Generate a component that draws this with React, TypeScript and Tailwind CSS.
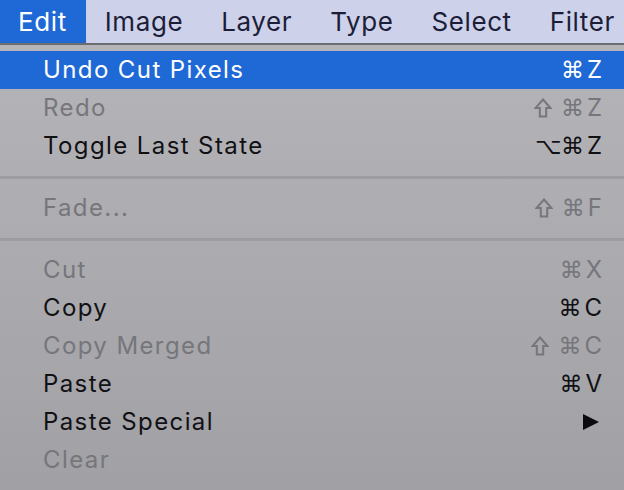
import React from "react";

type Item = {
  label: string;
  keys?: string[];
  enabled?: boolean;
  active?: boolean;
  submenu?: boolean;
};

const groups: Item[][] = [
  [
    { label: "Undo Cut Pixels", keys: ["⌘", "Z"], enabled: true, active: true },
    { label: "Redo", keys: ["⇧", "⌘", "Z"] },
    { label: "Toggle Last State", keys: ["⌥", "⌘", "Z"], enabled: true },
  ],
  [{ label: "Fade...", keys: ["⇧", "⌘", "F"] }],
  [
    { label: "Cut", keys: ["⌘", "X"] },
    { label: "Copy", keys: ["⌘", "C"], enabled: true },
    { label: "Copy Merged", keys: ["⇧", "⌘", "C"] },
    { label: "Paste", keys: ["⌘", "V"], enabled: true },
    { label: "Paste Special", enabled: true, submenu: true },
    { label: "Clear" },
  ],
];

const menus = ["Edit", "Image", "Layer", "Type", "Select", "Filter"];

// outline shift arrow, the font's ⇧ is too thin
function ShiftIcon() {
  return (
    <svg width="18" height="20" viewBox="0 0 18 20" className="mr-[5px]">
      <path
        d="M9 1.5 L16.5 10 H12.2 V18.5 H5.8 V10 H1.5 Z"
        fill="none"
        stroke="currentColor"
        strokeWidth="2"
      />
    </svg>
  );
}

function MenuRow({ item }: { item: Item }) {
  const color = item.active
    ? "text-white"
    : item.enabled
    ? "text-[#111114]"
    : "text-[#76767b]";
  return (
    <div
      className={`flex h-[38px] items-center justify-between pl-[43px] pr-[22px] ${
        item.active ? "bg-[#1f69d6]" : ""
      } ${color}`}
    >
      <span className="text-[24px] leading-none tracking-[1.4px]">{item.label}</span>
      {item.keys && (
        <span className="flex items-center gap-[4px] text-[24px] leading-none">
          {item.keys.map((k, i) =>
            k === "⇧" ? (
              <ShiftIcon key={i} />
            ) : /[A-Z]/.test(k) ? (
              <span key={i}>{k}</span>
            ) : (
              <span
                key={i}
                className="w-[22px] text-center font-['DejaVu_Sans',sans-serif] text-[23px]"
              >
                {k}
              </span>
            )
          )}
        </span>
      )}
      {item.submenu && (
        <svg width="18" height="18" viewBox="0 0 18 18" className="mr-[2px]">
          <path d="M1 1 L17 9 L1 17 Z" fill="#0c0c0e" />
        </svg>
      )}
    </div>
  );
}

export default function App() {
  return (
    <div className="h-[490px] w-[624px] overflow-hidden bg-gradient-to-b from-[#b7b7bb] to-[#a0a0a5] font-['Inter','Liberation_Sans',sans-serif]">
      <div className="flex h-[43px] items-stretch bg-[#ced1ea] text-[26px] tracking-[0.6px] text-[#1c1e38]">
        {menus.map((m, i) => (
          <div
            key={m}
            className={`flex items-center px-[19px] ${
              i === 0 ? "bg-[#1f69d6] pl-[18px] text-white" : ""
            }`}
          >
            {m}
          </div>
        ))}
      </div>
      <div className="h-[2px] bg-[#6b6b70]" />
      <div className="pt-[6px]">
        {groups.map((g, gi) => (
          <div key={gi}>
            {gi > 0 && (
              <div className="flex h-[24px] items-center">
                <div className="h-[3px] w-full bg-[#9c9ca1]" />
              </div>
            )}
            {g.map((item) => (
              <MenuRow key={item.label} item={item} />
            ))}
          </div>
        ))}
      </div>
    </div>
  );
}
